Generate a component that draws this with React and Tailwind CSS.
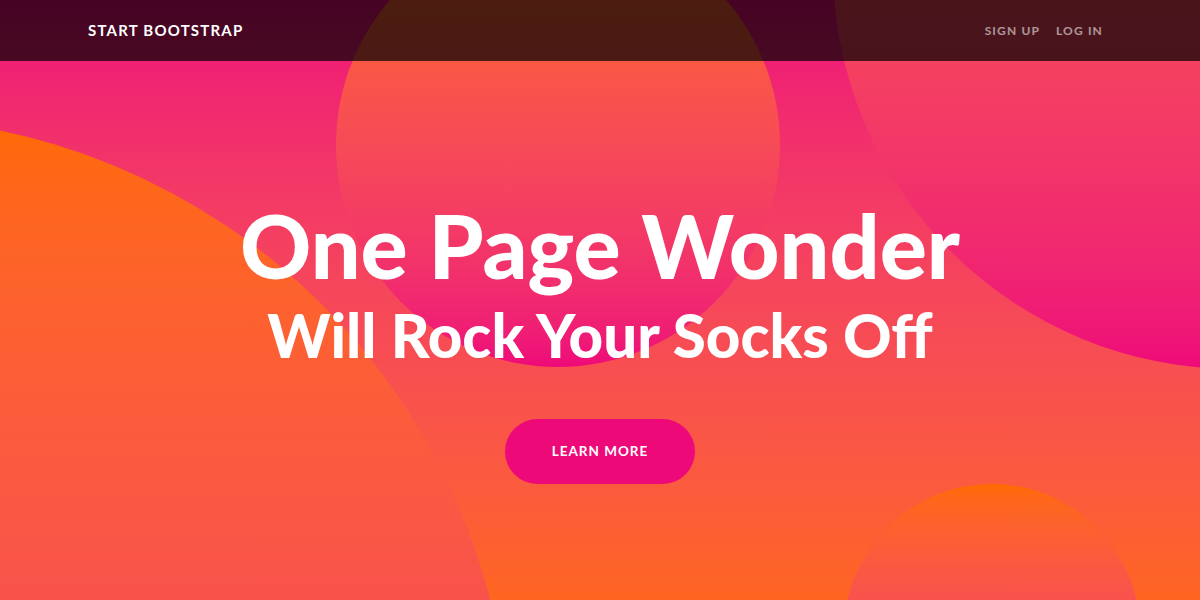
export default function App() {
    return (
        <div className="relative h-[600px] overflow-hidden font-['Lato','Liberation_Sans',sans-serif]">
            {/* Navbar over the hero */}
            <nav className="absolute inset-x-0 top-0 z-20 flex h-[61px] items-center justify-between bg-black/70 pl-[88px] pr-[97px]">
                <a className="text-[15px] font-bold uppercase tracking-[1.2px] text-white">Start Bootstrap</a>
                <div className="flex items-center gap-[16px] text-[12px] font-bold uppercase tracking-[1.15px] text-white/55">
                    <a>Sign Up</a>
                    <a>Log In</a>
                </div>
            </nav>

            {/* Masthead */}
            <header className="relative h-[650px] overflow-hidden bg-linear-to-b from-[#ee0979] to-[#ff6a00]">
                <div className="absolute left-[-772px] top-[117px] h-[1282px] w-[1282px] rounded-full bg-linear-to-b from-[#ff6a00] to-[#ee0979]" />
                <div className="absolute left-[833px] top-[-435px] h-[804px] w-[804px] rounded-full bg-linear-to-b from-[#ff6a00] to-[#ee0979]" />
                <div className="absolute left-[844px] top-[484px] h-[296px] w-[296px] rounded-full bg-linear-to-b from-[#ff6a00] to-[#ee0979]" />
                <div className="absolute left-[336px] top-[-77px] h-[444px] w-[444px] rounded-full bg-linear-to-b from-[#ff6a00] to-[#ee0979]" />

                <div className="relative z-10 flex flex-col items-center pt-[201px] text-center text-white">
                    <h1 className="text-[88px] font-black leading-none">One Page Wonder</h1>
                    <h2 className="mt-[16px] text-[60px] font-black leading-none">Will Rock Your Socks Off</h2>
                    <a className="mt-[54px] flex h-[65px] w-[190px] items-center justify-center rounded-full bg-[#ee0979] text-[13.5px] font-bold uppercase tracking-[1px]">
                        Learn More
                    </a>
                </div>
            </header>
        </div>
    );
}
